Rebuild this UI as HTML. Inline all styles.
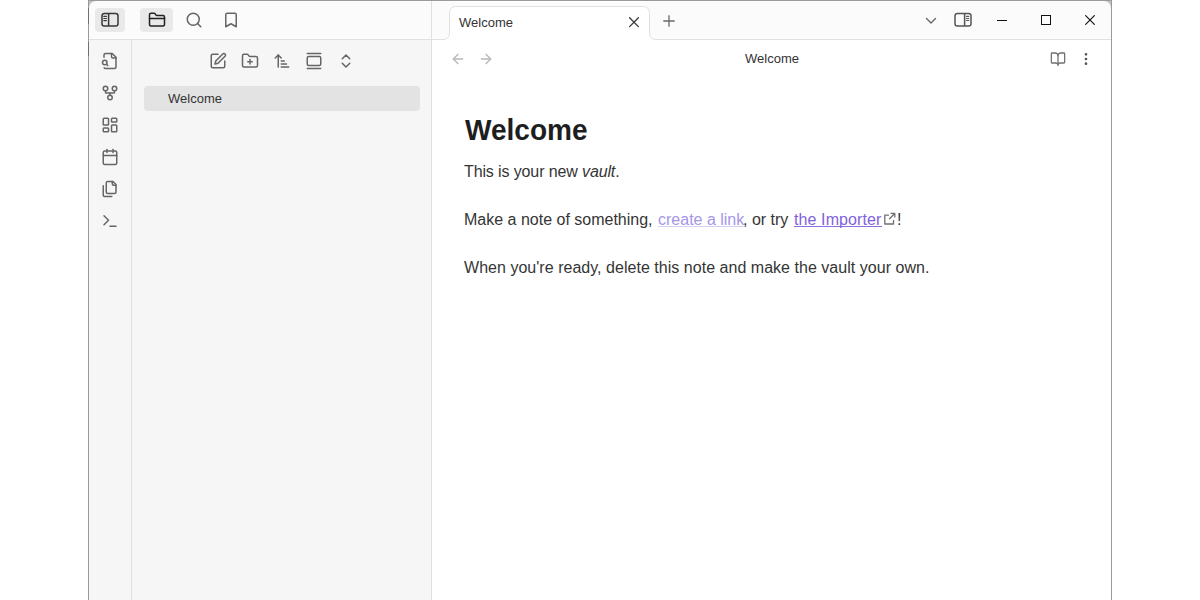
<!DOCTYPE html>
<html><head><meta charset="utf-8">
<style>
*{box-sizing:border-box;margin:0;padding:0}
html,body{width:1200px;height:600px;overflow:hidden;background:#fff;font-family:"Liberation Sans",sans-serif;position:relative}
.a{position:absolute}
#win{position:absolute;left:88px;top:0;width:1024px;height:640px;border:1px solid #8f8f8f;border-radius:8px 8px 0 0;overflow:hidden;background:#fff}
svg.i{position:absolute;fill:none;stroke:#666;stroke-width:2;stroke-linecap:round;stroke-linejoin:round}
.btnbg{position:absolute;background:#e9e9e9;border-radius:4px}
.ui{font-size:13px;color:#333;white-space:pre;line-height:1}
.p{position:absolute;left:464px;font-size:16px;color:#353535;white-space:pre;line-height:1}
</style></head><body>
<div class="a" style="left:88px;top:0;width:1024px;height:600px;background:#9a9a9a"></div>
<div class="a" style="left:89px;top:1px;width:1022px;height:599px;background:#fff"></div>
<div class="a" style="left:89px;top:1px;width:8px;height:8px;background:#c2c2c2"></div>
<div class="a" style="left:1103px;top:1px;width:8px;height:8px;background:#c2c2c2"></div>
<div class="a" style="left:88px;top:8px;width:1px;height:16px;background:#707070"></div>
<div class="a" style="left:88px;top:42px;width:1px;height:14px;background:#707070"></div>
<!-- title bar -->
<div class="a" style="left:89px;top:1px;width:1022px;height:38px;background:#fbfbfb;border-radius:7px 7px 0 0"></div>
<div class="a" style="left:89px;top:39px;width:1022px;height:1px;background:#e0e0e0"></div>
<div class="a" style="left:97px;top:1px;width:1006px;height:1px;background:#fff"></div>
<!-- ribbon -->
<div class="a" style="left:89px;top:40px;width:42px;height:560px;background:#f6f6f6"></div>
<div class="a" style="left:131px;top:40px;width:1px;height:560px;background:#e0e0e0"></div>
<!-- sidebar -->
<div class="a" style="left:132px;top:40px;width:299px;height:560px;background:#f6f6f6"></div>
<div class="a" style="left:431px;top:1px;width:1px;height:599px;background:#e0e0e0"></div>
<!-- titlebar left buttons -->
<div class="btnbg" style="left:95px;top:8px;width:30px;height:24px"></div>
<svg class="i" style="left:100px;top:12px;stroke:#383838" width="20" height="16" viewBox="0 0 20 16"><rect x="2" y="1.4" width="16" height="12.6" rx="2.3" stroke-width="1.5"/><path d="M8.6 1.4v12.6" stroke-width="1.5" stroke-linecap="butt"/><path d="M3.8 4.4h2.6M3.8 6.5h2.6M3.8 8.6h2.6" stroke-width="1.2"/></svg>
<div class="btnbg" style="left:140px;top:8px;width:33px;height:24px"></div>
<svg class="i" style="left:148px;top:11px;stroke:#222" width="18" height="18" viewBox="0 0 24 24"><path d="M20 20a2 2 0 0 0 2-2V8a2 2 0 0 0-2-2h-7.9a2 2 0 0 1-1.69-.9L9.6 3.9A2 2 0 0 0 7.93 3H4a2 2 0 0 0-2 2v13a2 2 0 0 0 2 2Z"/><path d="M2 10h20"/></svg>
<svg class="i" style="left:185px;top:11px" width="18" height="18" viewBox="0 0 24 24"><circle cx="11" cy="11" r="8"/><path d="m21 21-4.3-4.3"/></svg>
<svg class="i" style="left:222px;top:11px" width="18" height="18" viewBox="0 0 24 24"><path d="m19 21-7-4-7 4V5a2 2 0 0 1 2-2h10a2 2 0 0 1 2 2v16z"/></svg>

<!-- tab -->
<svg class="a" style="left:436px;top:6px" width="228" height="35" viewBox="0 0 228 35"><path d="M7.5 33.5A6 6 0 0 0 13.5 27.5V6.5A6 6 0 0 1 19.5 0.5H207.5A6 6 0 0 1 213.5 6.5V27.5A6 6 0 0 0 219.5 33.5V34.5H7.5Z" fill="#fff"/><path d="M0 33.5H7.5A6 6 0 0 0 13.5 27.5V6.5A6 6 0 0 1 19.5 0.5H207.5A6 6 0 0 1 213.5 6.5V27.5A6 6 0 0 0 219.5 33.5H228" fill="none" stroke="#e0e0e0" stroke-width="1"/></svg>
<div class="a ui" style="left:459px;top:16px">Welcome</div>
<svg class="i" style="left:628px;top:16px;stroke:#3a3a3a" width="12" height="12" viewBox="0 0 12 12"><path d="M1.6 1.8l8.8 8.8M10.4 1.8l-8.8 8.8" stroke-width="1.3"/></svg>
<svg class="i" style="left:662px;top:14px;stroke:#6a6a6a" width="14" height="14" viewBox="0 0 14 14"><path d="M7 1.3v11.4M1.3 7h11.4" stroke-width="1.3" stroke-linecap="butt"/></svg>

<!-- titlebar right -->
<svg class="i" style="left:925px;top:15px" width="12" height="12" viewBox="0 0 12 12"><path d="M1.5 3.5l4.5 4.5 4.5-4.5" stroke-width="1.4"/></svg>
<svg class="i" style="left:953px;top:12px;stroke:#555" width="20" height="16" viewBox="0 0 20 16"><rect x="2" y="1.4" width="16" height="12.6" rx="2.3" stroke-width="1.5"/><path d="M11.6 1.4v12.6" stroke-width="1.5" stroke-linecap="butt"/><path d="M13.4 4.3h2.4M13.4 6.5h2.4M13.4 8.5h2.4" stroke-width="1.2"/></svg>
<div class="a" style="left:997px;top:20px;width:10px;height:1px;background:#111"></div>
<div class="a" style="left:1041px;top:15px;width:10px;height:10px;border:1px solid #111"></div>
<svg class="i" style="left:1085px;top:15px;stroke:#111" width="10" height="10" viewBox="0 0 10 10"><path d="M0.3 0.3L9.7 9.7M9.7 0.3L0.3 9.7" stroke-width="1.15" stroke-linecap="butt"/></svg>

<!-- ribbon icons -->
<svg class="i" style="left:101px;top:51.5px" width="18" height="18" viewBox="0 0 24 24"><path d="M14 2v4a2 2 0 0 0 2 2h4"/><path d="M4.268 21a2 2 0 0 0 1.727 1H18a2 2 0 0 0 2-2V7l-5-5H6a2 2 0 0 0-2 2v3"/><path d="m9 18-1.5-1.5"/><circle cx="5" cy="14" r="3"/></svg>
<svg class="i" style="left:101px;top:83.5px" width="18" height="18" viewBox="0 0 24 24"><circle cx="12" cy="18" r="3"/><circle cx="6" cy="6" r="3"/><circle cx="18" cy="6" r="3"/><path d="M18 9v2c0 .6-.4 1-1 1H7c-.6 0-1-.4-1-1V9"/><path d="M12 12v3"/></svg>
<svg class="i" style="left:101px;top:115.5px" width="18" height="18" viewBox="0 0 24 24"><rect width="7" height="9" x="3" y="3" rx="1"/><rect width="7" height="5" x="14" y="3" rx="1"/><rect width="7" height="9" x="14" y="12" rx="1"/><rect width="7" height="5" x="3" y="16" rx="1"/></svg>
<svg class="i" style="left:101px;top:147.5px" width="18" height="18" viewBox="0 0 24 24"><path d="M8 2v4"/><path d="M16 2v4"/><rect width="18" height="18" x="3" y="4" rx="2"/><path d="M3 10h18"/></svg>
<svg class="i" style="left:101px;top:179.5px" width="18" height="18" viewBox="0 0 24 24"><path d="M20 7h-3a2 2 0 0 1-2-2V2"/><path d="M9 18a2 2 0 0 1-2-2V4a2 2 0 0 1 2-2h7l4 4v10a2 2 0 0 1-2 2Z"/><path d="M3 7.6v12.8A1.6 1.6 0 0 0 4.6 22h9.8"/></svg>
<svg class="i" style="left:101px;top:211.5px" width="18" height="18" viewBox="0 0 24 24"><polyline points="4 17 10 11 4 5"/><line x1="12" x2="20" y1="19" y2="19"/></svg>

<!-- sidebar nav icons -->
<svg class="i" style="left:208.5px;top:51.5px" width="18" height="18" viewBox="0 0 24 24"><path d="M12 3H5a2 2 0 0 0-2 2v14a2 2 0 0 0 2 2h14a2 2 0 0 0 2-2v-7"/><path d="M18.375 2.625a2.121 2.121 0 1 1 3 3L12 15l-4 1 1-4Z"/></svg>
<svg class="i" style="left:240.5px;top:51.5px" width="18" height="18" viewBox="0 0 24 24"><path d="M12 10v6"/><path d="M9 13h6"/><path d="M20 20a2 2 0 0 0 2-2V8a2 2 0 0 0-2-2h-7.9a2 2 0 0 1-1.69-.9L9.6 3.9A2 2 0 0 0 7.93 3H4a2 2 0 0 0-2 2v13a2 2 0 0 0 2 2Z"/></svg>
<svg class="i" style="left:272.5px;top:52px" width="18" height="18" viewBox="0 0 24 24"><path d="m3 8 4-4 4 4"/><path d="M7 4v16"/><path d="M11 12h4"/><path d="M11 16h7"/><path d="M11 20h10"/></svg>
<svg class="i" style="left:304.5px;top:51.5px" width="18" height="18" viewBox="0 0 24 24"><path d="M3 2h18"/><rect width="18" height="12" x="3" y="6" rx="2"/><path d="M3 22h18"/></svg>
<svg class="i" style="left:336.5px;top:51.5px" width="18" height="18" viewBox="0 0 24 24"><path d="m7 15 5 5 5-5"/><path d="m7 9 5-5 5 5"/></svg>

<!-- file item -->
<div class="a" style="left:144px;top:86px;width:276px;height:25px;background:#e3e3e3;border-radius:4px"></div>
<div class="a ui" style="left:168px;top:92px">Welcome</div>

<!-- view header -->
<svg class="i" style="left:450px;top:51px;stroke:#b8b8b8" width="16" height="16" viewBox="0 0 24 24"><path d="m12 19-7-7 7-7"/><path d="M19 12H5"/></svg>
<svg class="i" style="left:478px;top:51px;stroke:#b8b8b8" width="16" height="16" viewBox="0 0 24 24"><path d="m12 5 7 7-7 7"/><path d="M5 12h14"/></svg>
<div class="a ui" style="left:745px;top:52px">Welcome</div>
<svg class="i" style="left:1050px;top:50.75px;stroke:#707070;stroke-width:1.9" width="16" height="16" viewBox="0 0 24 24"><path d="M12 7v14"/><path d="M3 18a1 1 0 0 1-1-1V4a1 1 0 0 1 1-1h5a4 4 0 0 1 4 4 4 4 0 0 1 4-4h5a1 1 0 0 1 1 1v13a1 1 0 0 1-1 1h-6a3 3 0 0 0-3 3 3 3 0 0 0-3-3z"/></svg>
<svg class="i" style="left:1078px;top:51px;stroke:#555" width="16" height="16" viewBox="0 0 24 24"><circle cx="12" cy="5" r="1"/><circle cx="12" cy="12" r="1"/><circle cx="12" cy="19" r="1"/></svg>

<!-- content -->
<div class="a" style="left:464.5px;top:115px;font-size:30px;font-weight:bold;color:#1e1e1e;line-height:1;white-space:pre;transform-origin:0 0;transform:scaleX(0.935)">Welcome</div>
<div class="p" style="top:164px;letter-spacing:-0.12px">This is your new <i>vault</i>.</div>
<div class="p" style="top:212px">Make a note of something,</div>
<div class="p" style="top:212px;left:658px;color:#a596e8">create a link</div>
<div class="a" style="left:658px;top:226px;width:86px;height:1px;background:#d6cff3"></div>
<div class="p" style="top:212px;left:743px">, or try</div>
<div class="p" style="top:212px;left:794px;color:#7f62dc;letter-spacing:0.1px">the Importer</div>
<div class="a" style="left:794px;top:226px;width:88px;height:1px;background:#8a70de"></div>
<svg class="a" style="left:883px;top:212px" width="13" height="13" viewBox="0 0 13 13" fill="none" stroke="#707070" stroke-width="1.3" stroke-linecap="round" stroke-linejoin="round"><path d="M5.5 3.2H1.8V12H10.5V8.5M6.5 6.8 11.7 1.5M8 1.3H11.8V5"/></svg>
<div class="p" style="top:212px;left:897px">!</div>
<div class="p" style="top:260px;letter-spacing:0.03px">When you're ready, delete this note and make the vault your own.</div>
</body></html>
